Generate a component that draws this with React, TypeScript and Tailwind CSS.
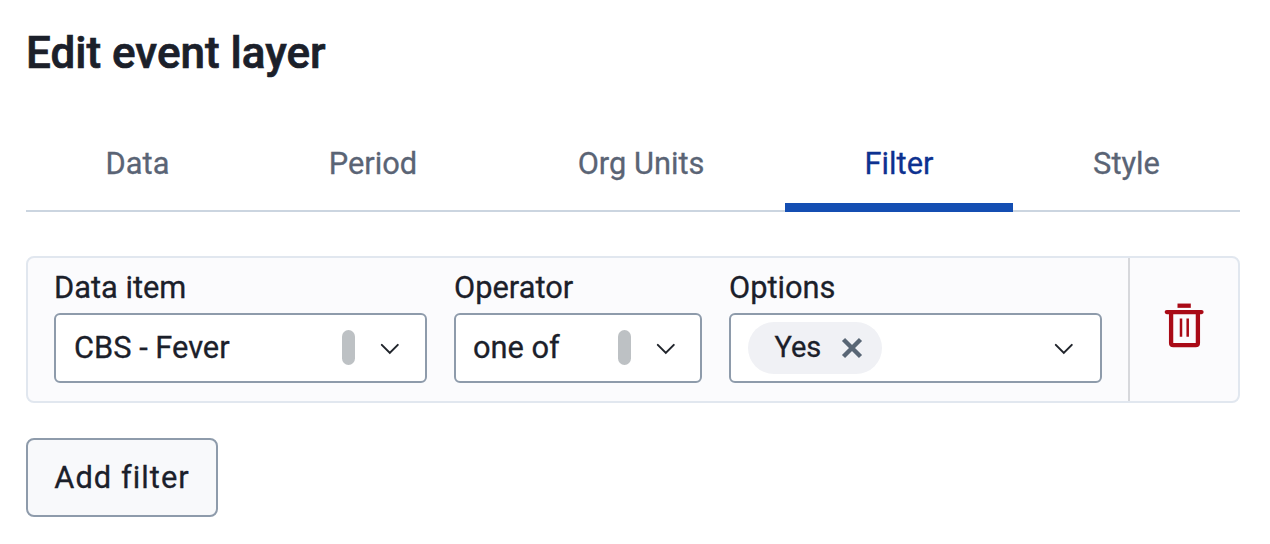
import type { ReactNode } from 'react';

const tabs = [
  { label: 'Data', width: 'w-[223px]' },
  { label: 'Period', width: 'w-[248px]' },
  { label: 'Org Units', width: 'w-[288px]' },
  { label: 'Filter', width: 'w-[228px]', active: true },
  { label: 'Style', width: 'w-[227px]' },
];

function Chevron() {
  return (
    <svg className="h-6 w-6 shrink-0" viewBox="0 0 24 24" fill="none" stroke="#20242b" strokeWidth="2" strokeLinecap="round">
      <path d="M3.8 8.9l8 8 8-8" />
    </svg>
  );
}

function Field({ label, width, inset, children }: { label: string; width: string; inset: string; children: ReactNode }) {
  return (
    <div className={width}>
      <div className="h-[36px] text-[30.8px] leading-[36px] whitespace-nowrap">{label}</div>
      <div className={`${inset} mt-[7px] flex h-[70px] items-center rounded-[6px] border-2 border-[#8e9bab] bg-white`}>
        {children}
        <Chevron />
      </div>
    </div>
  );
}

function Value({ children }: { children: ReactNode }) {
  return <span className="pb-px text-[30.8px] leading-[36px] whitespace-nowrap">{children}</span>;
}

function Handle() {
  return <span className="mr-[23px] mb-px ml-auto h-[35px] w-[13px] shrink-0 rounded-full bg-[#bdc1c4]" />;
}

export default function App() {
  return (
    <main className="h-[544px] w-[1270px] overflow-hidden bg-white pr-[30px] pl-[26px] font-['Roboto',sans-serif] text-[#1b202a] [-webkit-text-stroke:0.3px]">
      <h1 className="pt-[27px] text-[44px] leading-[52px] font-medium [-webkit-text-stroke:0.7px]">Edit event layer</h1>
      <nav className="mt-[37px] flex h-[96px] border-b-2 border-[#cbd5e0]">
        {tabs.map((t) => (
          <button
            key={t.label}
            className={`${t.width} flex h-[96px] shrink-0 justify-center pt-[30px] text-[30.8px] leading-[36px] ${t.active ? 'border-b-[9px] border-[#144eb2] text-[#0d3190]' : 'text-[#5a6475]'}`}
          >
            {t.label}
          </button>
        ))}
      </nav>
      <section className="mt-[44px] flex h-[147px] rounded-[8px] border-2 border-[#e1e7ef] bg-[#fbfbfd]">
        <div className="flex flex-1 gap-[27px] pt-[12px] pl-[26px]">
          <Field label="Data item" width="w-[373px]" inset="pl-[18px] pr-[23px]">
            <Value>CBS - Fever</Value>
            <Handle />
          </Field>
          <Field label="Operator" width="w-[248px]" inset="pl-[17px] pr-[22px]">
            <Value>one of</Value>
            <Handle />
          </Field>
          <Field label="Options" width="w-[373px]" inset="pl-[17px] pr-[24px]">
            <span className="mr-auto flex h-[52px] w-[134px] items-center rounded-full bg-[#f0f1f5] pl-[26.5px] text-[29px]">
              Yes
              <svg className="ml-[19.5px] h-[22px] w-[22px]" viewBox="0 0 22 22" stroke="#596675" strokeWidth="4.4">
                <path d="M2.5 2.5l17 17M19.5 2.5l-17 17" />
              </svg>
            </span>
          </Field>
        </div>
        <button className="flex w-[110px] justify-center border-l-2 border-[#d7d8dc] pt-[45px]" aria-label="Remove filter">
          <svg className="h-[45px] w-[40px]" viewBox="0 0 40 45" fill="none" stroke="#a90a16" strokeWidth="4.3">
            <path d="M13.5 2.7h13.3" />
            <path d="M2.8 9.1h34.7" strokeLinecap="round" />
            <path d="M7.1 10v30q0 2.2 2.2 2.2h22.4q2.2 0 2.2-2.2V10" />
            <path d="M17 15.5v18.3M23.7 15.5v18.3" strokeWidth="2.5" />
          </svg>
        </button>
      </section>
      <button className="mt-[35px] flex h-[79px] w-[192px] justify-center rounded-[8px] border-2 border-[#8e9bab] bg-[#f8f9fb] pt-[20px] text-[30.8px] leading-[36px] tracking-[1.05px]">
        Add filter
      </button>
    </main>
  );
}
